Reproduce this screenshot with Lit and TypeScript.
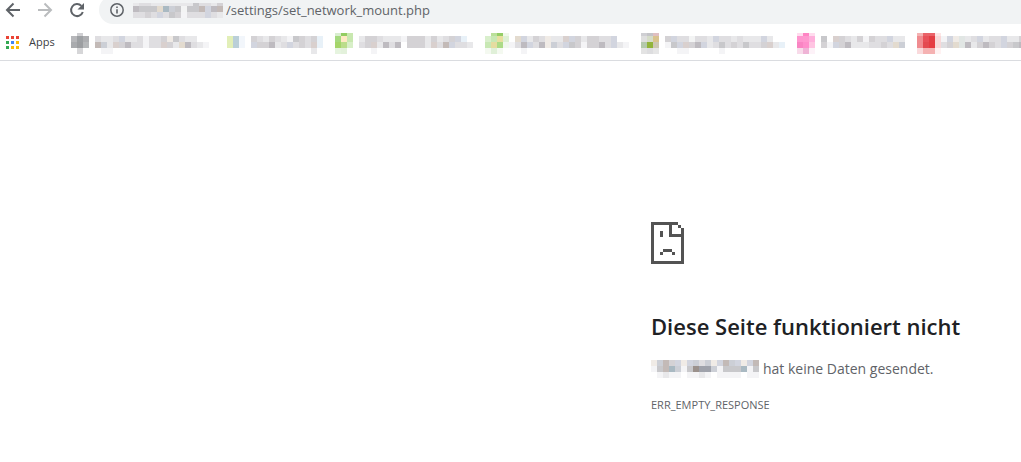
import { LitElement, html, css, svg } from "lit";
import { customElement, property } from "lit/decorators.js";

// One letter per colour of the redacted text; "." leaves a cell empty.
const TONES: Record<string, string> = {
  a: "#f4f4f6", b: "#e8e8ea", c: "#dfdee1", d: "#d4d2d5", e: "#c8c8cb",
  f: "#bebbc0", g: "#d2d5df", h: "#d9d0ce", i: "#a6a6ae", j: "#f0ebe6",
  k: "#e8f1f8", l: "#cccfd6", m: "#c3bab7", n: "#f3f4f4", o: "#a9b9c2",
  p: "#e3dbcf", q: "#b6c3d4", r: "#9b918c", s: "#9fa2ab", t: "#e1e6e4",
};

const cells = (row: string) => [...row].map((c) => TONES[c] ?? "");

@customElement("pixel-strip")
export class PixelStrip extends LitElement {
  @property({ attribute: false }) rows: string[][] = [];
  @property({ attribute: false }) heights: number[] = [];
  static styles = css`
    :host { display: block; flex: none; }
    .strip { display: block; }
  `;
  render() {
    const width = Math.max(...this.rows.map((r) => r.length)) * 6;
    const tops = this.heights.map((_, i) => this.heights.slice(0, i).reduce((a, b) => a + b, 0));
    const height = this.heights.reduce((a, b) => a + b, 0);
    return html`<svg class="strip" width=${width} height=${height} shape-rendering="crispEdges" aria-hidden="true">
      ${this.rows.map((row, y) => row.map((fill, x) => fill
        ? svg`<rect x=${x * 6} y=${tops[y]} width="6" height=${this.heights[y]} fill=${fill}></rect>`
        : null))}
    </svg>`;
  }
}

interface Bookmark { icon: string[]; text: string[]; }

const BOOKMARKS: Bookmark[] = [
  { icon: [". #cfcfd2 .", "#b6b7ba #9da0a3 #adaeb1", "#a9abae #9c9ea1 #b6b8ba", ". #d6d6d8 ."],
    text: ["", "cbbcgbbcaccdjecbb...", "mlbhdfccacchdbpfcba.", ".aa"] },
  { icon: [". . .", "#e2efb8 #bacfd8 #f2f6fb", "#e2efb8 #bacfd8 #f2f6fb", ". . ."],
    text: ["", "dcbdcbaedcdk", "gddfbcgcdchk", "..........b"] },
  { icon: ["#d9eed0 #93cd62 #c9e8b0", "#a5d97f #ffeac4 #c8e8b0", "#a5d56a #bbdd8b #d8efc8", "#e6f4df #e3f1db ."],
    text: ["", "bddcbbbadddbdbcdgk.", "cdhbfcf.dddbhcmgccb", "..a"] },
  { icon: [". #bbe09a #94cd66 #f0f8ea", "#d9efcc #c8e8b4 #e8dfa0 #def0d4", "#c8e8b4 #e5dca0 #acdb86 #f0f7ec", "#f4f9f0 #e0f0d8 #f4f9f0 ."],
    text: ["", ".pgbdcjbbhgdbddccg..", "acfgcfjlcgedaddfcgba", "..a"] },
  { icon: ["#cfcfd3 #c4c4c8 #dfbfc2", "#dfdfdf #d5dcc8 #d9c38e", "#b4c9ac #92b43a #cdc7b2", "#e3e3e3 #dddddf #e6e6e6"],
    text: ["", "dgccnccbgccbcbbbgb..", "aeghdfgbcecdceccdhbk", "..aa.....a"] },
  { icon: ["#ffdcee #ff85c4 #ffdcee", "#ff96cf #ff99cf #ffb0dc", "#f985c3 #ff8ecb #ffc4e2", "#f8dbea #efb4d6 #fdf2f8"],
    text: ["", "e.hdcbdadccgbb", "dagdfbbbccdcpl", ""] },
  { icon: ["#f4b2b2 #ea6268 #ea6268 #fde6e6", "#f08c90 #e85058 #e33e44 #f8d8d8", "#f08c90 #e44a50 #e63c42 #f8d8d8", "#fadadc #f5b2b2 #f5b2b2 #fff2f2"],
    text: ["", "agjtbcgbccgbbdcg", "cdptfbdfdcgdefcc", ""] },
];

const bookmarkRows = (b: Bookmark) =>
  b.icon.map((line, i) => {
    const icon = line.split(" ").map((c) => (c === "." ? "" : c));
    while (icon.length < 4) icon.push("");
    return [...icon, ...cells(b.text[i])];
  });

const APP_DOTS = ["#ea4335", "#ea4335", "#ea4335", "#34a853", "#4285f4", "#fbbc05", "#34a853", "#fbbc05", "#fbbc05"];

@customElement("app-root")
export class AppRoot extends LitElement {
  static styles = css`
    :host {
      display: block;
      overflow: hidden;
      background: #fff;
      color: #5f6368;
      font-family: "Open Sans", "Noto Sans", sans-serif;
    }
    .toolbar { display: flex; align-items: flex-end; height: 24px; overflow: hidden; }
    .nav { display: flex; gap: 12px; padding: 0 12px 4px 3px; }
    .tool { width: 20px; height: 20px; padding: 0; border: 0; background: none; color: #5f6368; }
    .tool:disabled { color: #babcbe; }
    .tool svg { display: block; }
    .omnibox {
      display: flex; flex: 1; align-items: center; min-width: 0; height: 28px;
      padding-left: 10px; border-radius: 14px 0 0 14px; background: #f1f3f4;
    }
    .info { flex: none; margin-right: 8px; }
    .address {
      flex: 1; min-width: 0; height: 20px; padding: 0 0 0 3px; border: 0; outline: 0;
      background: none; color: #5f6368; font: 13px/20px "Open Sans", "Noto Sans", sans-serif;
    }
    .bookmarks {
      display: flex; align-items: flex-start; gap: 12px; height: 27px; overflow: hidden;
      padding: 9px 0 0 6px; border-bottom: 1px solid #dadce0;
    }
    .bookmark { display: block; }
    .apps { display: flex; align-items: center; gap: 10px; height: 18px; margin-right: 4px; color: #3c4043; font-size: 11px; line-height: 18px; text-decoration: none; }
    .page { display: flex; justify-content: flex-end; padding: 161px 54px 48px 16px; }
    .error { width: 316px; }
    .sad { display: block; }
    h1 { margin: 46px 0 0; color: #202124; font-size: 22px; font-weight: 600; line-height: 32px; white-space: nowrap; }
    .reason { display: flex; align-items: center; gap: 4px; margin: 17px 0 0; font-size: 14px; line-height: 20px; white-space: nowrap; }
    .code { margin: 18px 0 0; font-size: 11px; line-height: 16px; }
  `;

  render() {
    return html`
      <header>
        <div class="toolbar">
          <nav class="nav" aria-label="Navigation">
            <button class="tool" aria-label="Zurück">
              <svg width="20" height="20" viewBox="0 0 20 20" fill="none" stroke="currentColor" stroke-width="2"><path d="M17 10H4.500M10.500 3.500 4 10l6.500 6.500"/></svg>
            </button>
            <button class="tool" aria-label="Vorwärts" disabled>
              <svg width="20" height="20" viewBox="0 0 20 20" fill="none" stroke="currentColor" stroke-width="2"><path d="M3 10h12.500M9.500 3.500 16 10l-6.500 6.500"/></svg>
            </button>
            <button class="tool" aria-label="Neu laden">
              <svg width="20" height="20" viewBox="0 0 20 20"><path fill="none" stroke="currentColor" stroke-width="2" d="M15.800 12A6 6 0 1 1 14.400 5.900"/><path fill="currentColor" d="M17 3v6.500h-6.500z"/></svg>
            </button>
          </nav>
          <div class="omnibox">
            <svg class="info" width="16" height="16" viewBox="0 0 16 16" aria-hidden="true"><circle cx="8" cy="8" r="6.200" fill="none" stroke="#5f6368" stroke-width="1.500"/><path fill="#5f6368" d="M7.200 4.500h1.600v1.600H7.200zM7.200 7.200h1.600v4.300H7.200z"/></svg>
            <pixel-strip .heights=${[3, 6, 6]} .rows=${["bccbbbbbbbeccbd", "feeepoleneemgfm", "ccdcgcedacccgcb"].map(cells)}></pixel-strip>
            <input class="address" type="text" aria-label="Adresse" spellcheck="false" value="/settings/set_network_mount.php" />
          </div>
        </div>
        <nav class="bookmarks" aria-label="Lesezeichen">
          <a class="apps" href="#">
            <svg width="13" height="13" aria-hidden="true" shape-rendering="crispEdges">
              ${APP_DOTS.map((c, i) => svg`<rect x=${(i % 3) * 5} y=${Math.floor(i / 3) * 5} width="3" height="3" fill=${c}></rect>`)}
            </svg>Apps</a>
          ${BOOKMARKS.map((b, i) => html`<a class="bookmark" href="#" aria-label=${"Lesezeichen " + (i + 1)}><pixel-strip .heights=${[3, 6, 6, 6]} .rows=${bookmarkRows(b)}></pixel-strip></a>`)}
        </nav>
      </header>
      <main class="page">
        <section class="error">
          <svg class="sad" width="33" height="42" viewBox="0 0 11 14" fill="#535353" shape-rendering="crispEdges" aria-hidden="true">
            <path d="M0 0h9v1H7v3h3V2h1v12H0zM1 1v12h9V5H6V1zM9 1h1v1H9zM3 3h1v2H3zM4 9h3v1H4zM3 10h1v1H3zM7 10h1v1H7z" fill-rule="evenodd"/>
          </svg>
          <h1>Diese Seite funktioniert nicht</h1>
          <p class="reason"><pixel-strip .heights=${[6, 6, 6]} .rows=${["jlmdgjglcljgmlgjgm", "aemolaersslaeeeoae", ".abaa.aaba.aaaa.aa"].map(cells)}></pixel-strip><span>hat keine Daten gesendet.</span></p>
          <p class="code">ERR_EMPTY_RESPONSE</p>
        </section>
      </main>
    `;
  }
}
